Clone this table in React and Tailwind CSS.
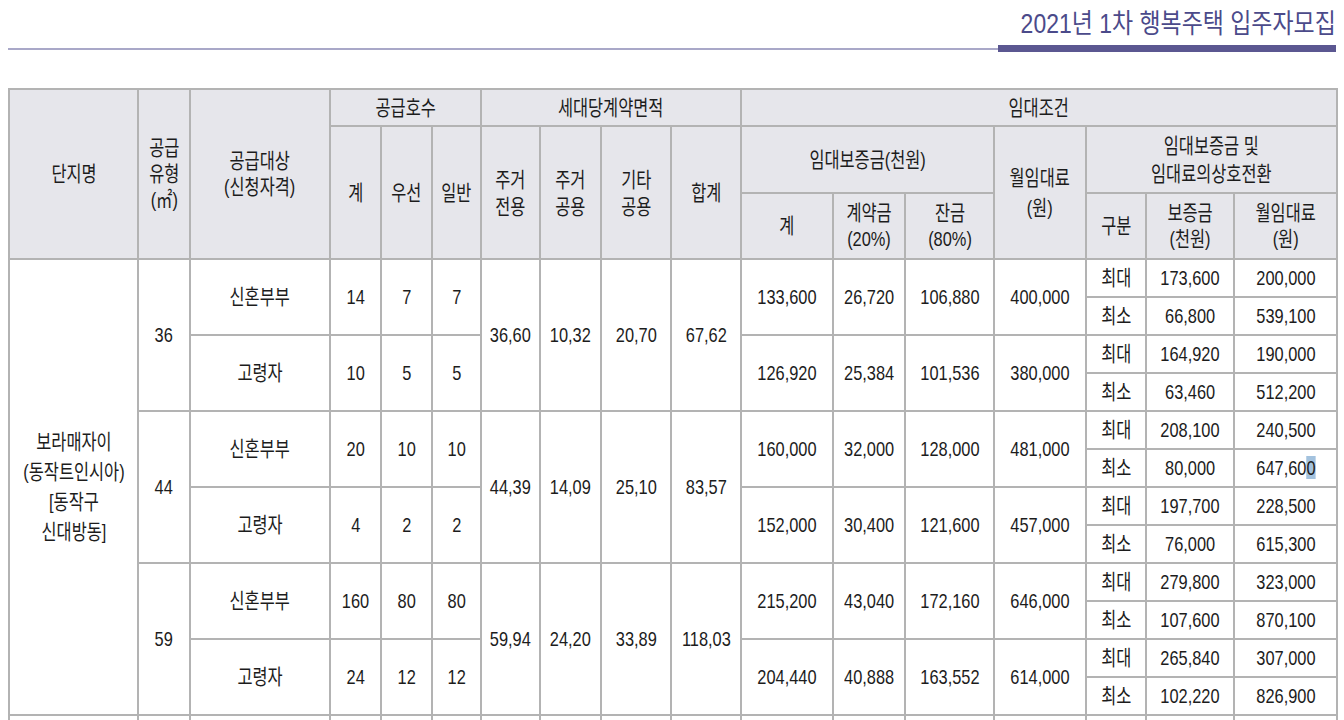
import React from 'react';

const blocks = [
	{
		type: '36',
		area: ['36,60', '10,32', '20,70', '67,62'],
		rows: [
			{ who: '신혼부부', cnt: ['14', '7', '7'], dep: ['133,600', '26,720', '106,880'], rent: '400,000', conv: [['최대', '173,600', '200,000'], ['최소', '66,800', '539,100']] },
			{ who: '고령자', cnt: ['10', '5', '5'], dep: ['126,920', '25,384', '101,536'], rent: '380,000', conv: [['최대', '164,920', '190,000'], ['최소', '63,460', '512,200']] },
		],
	},
	{
		type: '44',
		area: ['44,39', '14,09', '25,10', '83,57'],
		rows: [
			{ who: '신혼부부', cnt: ['20', '10', '10'], dep: ['160,000', '32,000', '128,000'], rent: '481,000', conv: [['최대', '208,100', '240,500'], ['최소', '80,000', '647,600']] },
			{ who: '고령자', cnt: ['4', '2', '2'], dep: ['152,000', '30,400', '121,600'], rent: '457,000', conv: [['최대', '197,700', '228,500'], ['최소', '76,000', '615,300']] },
		],
	},
	{
		type: '59',
		area: ['59,94', '24,20', '33,89', '118,03'],
		rows: [
			{ who: '신혼부부', cnt: ['160', '80', '80'], dep: ['215,200', '43,040', '172,160'], rent: '646,000', conv: [['최대', '279,800', '323,000'], ['최소', '107,600', '870,100']] },
			{ who: '고령자', cnt: ['24', '12', '12'], dep: ['204,440', '40,888', '163,552'], rent: '614,000', conv: [['최대', '265,840', '307,000'], ['최소', '102,220', '826,900']] },
		],
	},
];

const widths = [129, 52, 140, 51, 51, 49, 59, 61, 70, 70, 92, 72, 89, 92, 60, 88, 103];

// cell text is drawn in a narrowed face, like the print original
const Txt = ({ children, lead = 'leading-[26px]' }) => (
	<div className="flex justify-center">
		<span className={`inline-block whitespace-nowrap scale-x-[0.78] ${lead}`}>{children}</span>
	</div>
);

const Th = ({ children, rowSpan, colSpan, lead }) => (
	<th
		rowSpan={rowSpan}
		colSpan={colSpan}
		className="border-2 border-[#b3b3b3] bg-[#e6e6eb] p-0 text-center align-middle font-normal"
	>
		<Txt lead={lead}>{children}</Txt>
	</th>
);

const Td = ({ children, rowSpan, lead }) => (
	<td rowSpan={rowSpan} className="border-2 border-[#b3b3b3] p-0 text-center align-middle">
		<Txt lead={lead}>{children}</Txt>
	</td>
);

const Value = ({ v }) => {
	if (v === '647,600') {
		return (
			<>
				647,60<span className="bg-[#a3c2de]">0</span>
			</>
		);
	}
	return v;
};

const App = () => {
	const body = [];
	blocks.forEach((b, bi) => {
		b.rows.forEach((r, ri) => {
			r.conv.forEach((c, ci) => {
				body.push(
					<tr key={`${bi}-${ri}-${ci}`} className="h-[38px]">
						{bi === 0 && ri === 0 && ci === 0 && (
							<Td rowSpan={12} lead="leading-[30px]">
								보라매자이
								<br />
								(동작트인시아)
								<br />
								[동작구
								<br />
								신대방동]
							</Td>
						)}
						{ri === 0 && ci === 0 && <Td rowSpan={4}>{b.type}</Td>}
						{ci === 0 && (
							<>
								<Td rowSpan={2}>{r.who}</Td>
								{r.cnt.map((v, i) => (
									<Td key={i} rowSpan={2}>{v}</Td>
								))}
							</>
						)}
						{ri === 0 && ci === 0 &&
							b.area.map((v, i) => (
								<Td key={`a${i}`} rowSpan={4}>{v}</Td>
							))}
						{ci === 0 && (
							<>
								{r.dep.map((v, i) => (
									<Td key={`d${i}`} rowSpan={2}>{v}</Td>
								))}
								<Td rowSpan={2}>{r.rent}</Td>
							</>
						)}
						<Td>{c[0]}</Td>
						<Td>{c[1]}</Td>
						<Td>
							<Value v={c[2]} />
						</Td>
					</tr>
				);
			});
		});
	});

	return (
		<div
			className="min-h-screen bg-white px-2 pt-2 text-[#1c1c1c]"
			style={{ fontFamily: '"Liberation Sans", "Noto Sans CJK KR", sans-serif' }}
		>
			<div className="flex justify-end">
				<span className="inline-block origin-right scale-x-[0.85] whitespace-nowrap text-[27px] leading-[32px] text-[#4b4a8a]">
					2021년 1차 행복주택 입주자모집
				</span>
			</div>
			<div className="mt-[5px] flex h-[7px] items-center">
				<div className="h-[2px] flex-1 bg-[#a9a8c8]" />
				<div className="h-[7px] w-[338px] bg-[#5b5791]" />
			</div>

			<table className="mt-[36px] w-[1328px] table-fixed border-collapse text-[21px]">
				<colgroup>
					{widths.map((w, i) => (
						<col key={i} style={{ width: w }} />
					))}
				</colgroup>
				<thead>
					<tr className="h-[37px]">
						<Th rowSpan={3}>단지명</Th>
						<Th rowSpan={3}>
							공급
							<br />
							유형
							<br />
							(㎡)
						</Th>
						<Th rowSpan={3}>
							공급대상
							<br />
							(신청자격)
						</Th>
						<Th colSpan={3}>공급호수</Th>
						<Th colSpan={4}>세대당계약면적</Th>
						<Th colSpan={7}>임대조건</Th>
					</tr>
					<tr className="h-[67px]">
						<Th rowSpan={2}>계</Th>
						<Th rowSpan={2}>우선</Th>
						<Th rowSpan={2}>일반</Th>
						<Th rowSpan={2} lead="leading-[27px]">
							주거
							<br />
							전용
						</Th>
						<Th rowSpan={2} lead="leading-[27px]">
							주거
							<br />
							공용
						</Th>
						<Th rowSpan={2} lead="leading-[27px]">
							기타
							<br />
							공용
						</Th>
						<Th rowSpan={2}>합계</Th>
						<Th colSpan={3}>임대보증금(천원)</Th>
						<Th rowSpan={2} lead="leading-[30px]">
							월임대료
							<br />
							(원)
						</Th>
						<Th colSpan={3} lead="leading-[28px]">
							임대보증금 및
							<br />
							임대료의상호전환
						</Th>
					</tr>
					<tr className="h-[66px]">
						<Th>계</Th>
						<Th>
							계약금
							<br />
							(20%)
						</Th>
						<Th>
							잔금
							<br />
							(80%)
						</Th>
						<Th>구분</Th>
						<Th>
							보증금
							<br />
							(천원)
						</Th>
						<Th>
							월임대료
							<br />
							(원)
						</Th>
					</tr>
				</thead>
				<tbody>
					{body}
					<tr className="h-[38px]">
						{widths.map((w, i) => (
							<Td key={i}>{''}</Td>
						))}
					</tr>
				</tbody>
			</table>
		</div>
	);
};

export default App;
